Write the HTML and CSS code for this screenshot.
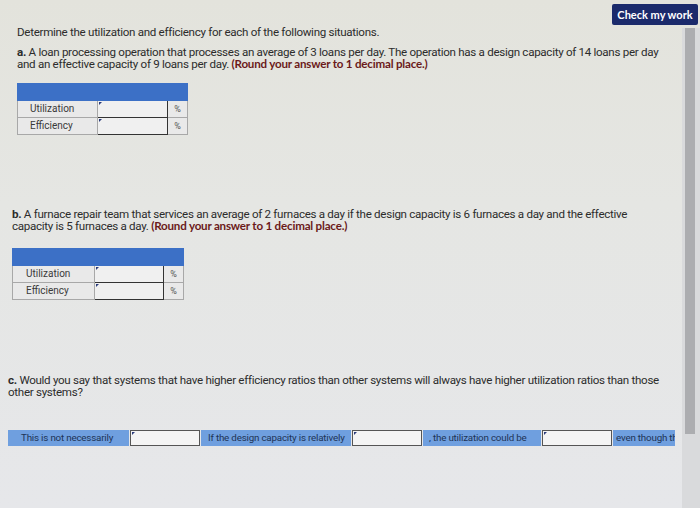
FILE: index.html
```html
<!DOCTYPE html>
<html>
<head>
<meta charset="utf-8">
<link rel="stylesheet" href="styles.css">
</head>
<body>
<div class="page">
  <div class="topbar"><button class="check">Check my work</button></div>
  <p class="intro">Determine the utilization and efficiency for each of the following situations.</p>

  <section class="q qa">
    <p><b>a.</b> A loan processing operation that processes an average of 3 loans per day. The operation has a design capacity of 14 loans per day and an effective capacity of 9 loans per day. <span class="round">(Round your answer to 1 decimal place.)</span></p>
    <table class="grid">
      <tr class="head"><td colspan="3"></td></tr>
      <tr><td class="lbl">Utilization</td><td class="inp"><span class="mark"></span></td><td class="pct">%</td></tr>
      <tr><td class="lbl">Efficiency</td><td class="inp"><span class="mark"></span></td><td class="pct">%</td></tr>
    </table>
  </section>

  <section class="q qb">
    <p><b>b.</b> A furnace repair team that services an average of 2 furnaces a day if the design capacity is 6 furnaces a day and the effective capacity is 5 furnaces a day. <span class="round">(Round your answer to 1 decimal place.)</span></p>
    <table class="grid">
      <tr class="head"><td colspan="3"></td></tr>
      <tr><td class="lbl">Utilization</td><td class="inp"><span class="mark"></span></td><td class="pct">%</td></tr>
      <tr><td class="lbl">Efficiency</td><td class="inp"><span class="mark"></span></td><td class="pct">%</td></tr>
    </table>
  </section>

  <section class="q qc">
    <p><b>c.</b> Would you say that systems that have higher efficiency ratios than other systems will always have higher utilization ratios than those other systems?</p>
    <div class="fill">
      <span class="cell c1">This is not necessarily</span>
      <span class="box b1"><span class="mark"></span></span>
      <span class="cell c2">If the design capacity is relatively</span>
      <span class="box b2"><span class="mark"></span></span>
      <span class="cell c3">, the utilization could be</span>
      <span class="box b3"><span class="mark"></span></span>
      <span class="cell c4">even though th</span>
    </div>
  </section>
  <div class="scroll"><div class="thumb"></div></div>
</div>
</body>
</html>
```
FILE: styles.css
```css
* { box-sizing: border-box; }
html, body { margin: 0; padding: 0; }
body {
  width: 700px; height: 508px; overflow: hidden;
  background: linear-gradient(180deg, #e3e3dc 0%, #e5e6e3 40%, #e6e7ea 100%);
  font-family: Roboto, "Liberation Sans", sans-serif;
  color: #2c2c2c;
}
.page { position: relative; width: 700px; height: 508px; padding: 0 20px 0 17px; }
.topbar { display: flex; justify-content: flex-end; padding-top: 4px; margin-right: -18px; height: 25px; }
.check {
  background: #1b2a6b; color: #fff; border: none; border-radius: 2px;
  font: bold 11px Lato, "Liberation Sans", sans-serif;
  width: 86px; height: 21px; padding: 0;
}
p { margin: 0; font-size: 11.6px; line-height: 12.5px; letter-spacing: -0.3px; }
.intro { margin-top: 1px; }
.qa p { max-width: 660px; }
.q p b { font-weight: bold; }
.round { color: #6b1a1a; font-weight: bold; font-family: Lato, "Liberation Sans", sans-serif; letter-spacing: -0.2px; }
.qa { margin-top: 7px; }
.grid { border-collapse: collapse; margin-top: 12px; font-size: 10px; }
.grid td { padding: 0; height: 17px; border: 1px solid #a8a8a8; background: #e9e9e9; }
.grid .head td { background: #3c70c6; border-color: #3c70c6; height: 17px; }
.grid .lbl { width: 80px; padding-left: 12px; color: #3a3a3a; }
.grid .inp { width: 70px; border: 1.5px solid #333; background: #f0f0f0; position: relative; }
.grid .pct { width: 20px; text-align: center; color: #555; font-size: 9px; }
.mark { position: absolute; left: 1px; top: 1px; width: 0; height: 0; border-left: 3px solid #2a3b7a; border-bottom: 3px solid transparent; }
.qb { margin-top: 73px; margin-left: -5px; }
.qb p { max-width: 634px; }
.qb .grid { margin-top: 15px; }
.qb .grid .lbl { width: 82px; padding-left: 13px; }
.qb .grid .inp { width: 69px; }
.qc { margin-top: 74px; margin-left: -9px; }
.qc p { max-width: 660px; }
.fill { display: flex; align-items: stretch; margin-top: 31px; height: 16px; font-size: 9.8px; letter-spacing: -0.2px; }
.cell { background: #6f9fdf; color: #1e3456; display: flex; align-items: center; padding-left: 6px; white-space: nowrap; overflow: hidden; }
.box { background: #f4f4f4; border: 1.5px solid #555; position: relative; width: 70px; margin: 0 1px; }
.c1 { width: 121px; padding-left: 13px; }
.c2 { width: 150px; padding-left: 7px; }
.c3 { width: 118px; }
.c4 { width: 62px; padding-left: 3px; }
.scroll { position: absolute; right: 0; top: 28px; width: 18px; height: 480px; background: #d9dadc; }
.thumb { margin-left: 3px; width: 10px; height: 406px; background: #acadb0; }
```
